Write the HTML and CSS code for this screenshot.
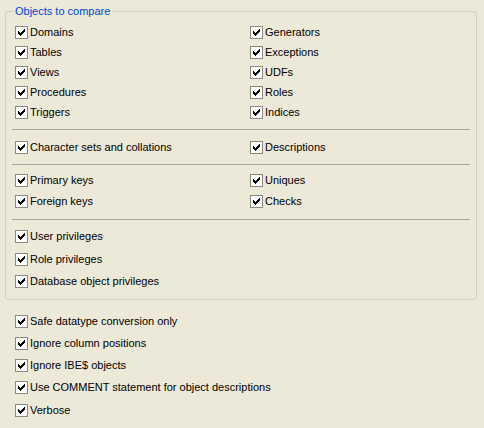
FILE: index.html
```html
<!DOCTYPE html>
<html>
<head>
<meta charset="utf-8">
<link rel="stylesheet" href="styles.css">
</head>
<body>
<fieldset class="group">
  <legend class="group-title">Objects to compare</legend>
  <div class="grid sec1">
    <label class="item"><span class="cb"></span>Domains</label>
    <label class="item"><span class="cb"></span>Generators</label>
    <label class="item"><span class="cb"></span>Tables</label>
    <label class="item"><span class="cb"></span>Exceptions</label>
    <label class="item"><span class="cb"></span>Views</label>
    <label class="item"><span class="cb"></span>UDFs</label>
    <label class="item"><span class="cb"></span>Procedures</label>
    <label class="item"><span class="cb"></span>Roles</label>
    <label class="item"><span class="cb"></span>Triggers</label>
    <label class="item"><span class="cb"></span>Indices</label>
  </div>
  <div class="sep"></div>
  <div class="grid sec2">
    <label class="item"><span class="cb"></span>Character sets and collations</label>
    <label class="item"><span class="cb"></span>Descriptions</label>
  </div>
  <div class="sep"></div>
  <div class="grid sec3">
    <label class="item"><span class="cb"></span>Primary keys</label>
    <label class="item"><span class="cb"></span>Uniques</label>
    <label class="item"><span class="cb"></span>Foreign keys</label>
    <label class="item"><span class="cb"></span>Checks</label>
  </div>
  <div class="sep"></div>
  <div class="list sec4">
    <label class="item"><span class="cb"></span>User privileges</label>
    <label class="item second"><span class="cb"></span>Role privileges</label>
    <label class="item"><span class="cb"></span>Database object privileges</label>
  </div>
</fieldset>
<div class="list options">
  <label class="item"><span class="cb"></span>Safe datatype conversion only</label>
  <label class="item"><span class="cb"></span>Ignore column positions</label>
  <label class="item"><span class="cb"></span>Ignore IBE$ objects</label>
  <label class="item"><span class="cb"></span>Use COMMENT statement for object descriptions</label>
  <label class="item last"><span class="cb"></span>Verbose</label>
</div>
</body>
</html>
```
FILE: styles.css
```css
html, body {
  margin: 0;
  padding: 0;
  background: #ECE9D8;
}
body {
  font-family: "Liberation Sans", Arial, sans-serif;
  font-size: 11px;
  color: #000;
  width: 484px;
  height: 428px;
  overflow: hidden;
}
.group {
  margin: 4px 7px 0 5px;
  padding: 4px 0 7px 0;
  border: 1px solid #D0D0BF;
  border-radius: 3px;
  min-width: 0;
}
.group-title {
  margin-left: 7px;
  padding: 0 2px;
  line-height: 14px;
  color: #0046D5;
}
.grid {
  display: grid;
  grid-template-columns: 235px 1fr;
  padding-left: 9px;
}
.list {
  display: flex;
  flex-direction: column;
  padding-left: 9px;
}
.item {
  display: flex;
  align-items: center;
  gap: 2px;
  height: 20px;
  line-height: 13px;
  white-space: nowrap;
}
.sec3 .item { height: 21px; }
.sec4 .item { height: 22px; }
.sec4 .second { margin-top: 1px; }
.sec2 { margin-top: 7px; }
.sec3 { margin-top: 5px; }
.sec4 { margin-top: 5px; }
.sep {
  margin: 7px 6px 0 6px;
  height: 1px;
  background: #ACA899;
}
.options {
  margin-top: 10px;
  padding-left: 15px;
}
.options .item { height: 22px; }
.options .last { margin-top: 1px; }
.cb {
  position: relative;
  flex: none;
  width: 11px;
  height: 11px;
  border: 1px solid #8A8A80;
  background: #fff;
}
.cb::after {
  content: "";
  position: absolute;
  left: 2px;
  top: 4px;
  width: 1px;
  height: 3px;
  background: #000;
  box-shadow: 1px 1px #000, 2px 2px #000, 3px 1px #000, 4px 0 #000, 5px -1px #000, 6px -2px #000;
}
```
